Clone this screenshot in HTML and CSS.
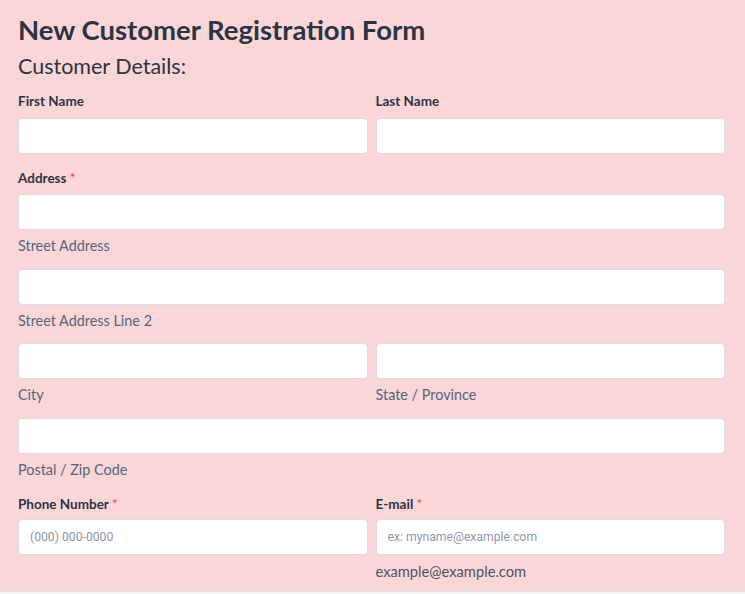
FILE: index.html
```html
<!DOCTYPE html>
<html lang="en">
<head>
<meta charset="utf-8">
<title>New Customer Registration Form</title>
<link rel="stylesheet" href="styles.css">
</head>
<body>
<div class="page">
  <form class="form">
    <h1 class="title">New Customer Registration Form</h1>
    <h2 class="subtitle">Customer Details:</h2>

    <div class="row first-row">
      <div class="field">
        <label class="label">First Name</label>
        <input class="input" type="text">
      </div>
      <div class="field">
        <label class="label">Last Name</label>
        <input class="input" type="text">
      </div>
    </div>

    <div class="section">
      <label class="label">Address <span class="req">*</span></label>
      <div class="group">
        <input class="input" type="text">
        <div class="sub">Street Address</div>
      </div>
      <div class="group tight">
        <input class="input" type="text">
        <div class="sub">Street Address Line 2</div>
      </div>
      <div class="row group">
        <div class="field">
          <input class="input" type="text">
          <div class="sub">City</div>
        </div>
        <div class="field">
          <input class="input" type="text">
          <div class="sub">State / Province</div>
        </div>
      </div>
      <div class="group last">
        <input class="input" type="text">
        <div class="sub">Postal / Zip Code</div>
      </div>
    </div>

    <div class="row section contact">
      <div class="field">
        <label class="label">Phone Number <span class="req">*</span></label>
        <input class="input" type="text" placeholder="(000) 000-0000">
      </div>
      <div class="field">
        <label class="label">E-mail <span class="req">*</span></label>
        <input class="input" type="text" placeholder="ex: myname@example.com">
        <div class="sub sub-dark">example@example.com</div>
      </div>
    </div>
  </form>
</div>
</body>
</html>
```

FILE: styles.css
```css
html, body {
  margin: 0;
  padding: 0;
  background: #f3f3f5;
}
body {
  font-family: "Lato", "Open Sans", "Liberation Sans", sans-serif;
  color: #2c3345;
}
.page {
  width: 745px;
  height: 591px;
  background: #fad6d6;
  border-bottom: 1px solid #dadde4;
  overflow: hidden;
}
.form {
  padding: 12px 20px 0 18px;
  display: flex;
  flex-direction: column;
}
.title {
  margin: 0;
  font-size: 27.5px;
  line-height: 36px;
  font-weight: 700;
  color: #2c3345;
}
.subtitle {
  margin: 4px 0 0;
  font-size: 21.5px;
  line-height: 28px;
  font-weight: 400;
  color: #2c3345;
}
.row {
  display: flex;
  gap: 8px;
}
.field {
  flex: 1 1 0;
  display: flex;
  flex-direction: column;
  min-width: 0;
}
.first-row {
  margin-top: 12px;
}
.label {
  display: block;
  font-size: 13.5px;
  line-height: 18px;
  font-weight: 700;
  margin-bottom: 8px;
}
.section .label {
  margin-bottom: 7px;
}
.contact .label {
  margin-bottom: 6px;
}
.req {
  color: #f23a3c;
  font-weight: 400;
}
.section {
  margin-top: 15px;
}
.group {
  margin-bottom: 15px;
}
.group.tight {
  margin-bottom: 14px;
}
.group.last {
  margin-bottom: 0;
}
.section + .section {
  margin-top: 17px;
}
.input {
  box-sizing: border-box;
  display: block;
  width: 100%;
  height: 36px;
  margin: 0;
  padding: 0 11px;
  background: #ffffff;
  border: 1px solid #d8dbe5;
  border-radius: 4px;
  font-family: "Roboto", "Liberation Sans", sans-serif;
  font-size: 12.2px;
  color: #2c3345;
  outline: none;
}
.input::placeholder {
  color: #8f96a8;
}
.sub {
  margin-top: 8px;
  font-size: 14.4px;
  line-height: 16px;
  color: #57647e;
}
.sub-dark {
  margin-top: 8px;
  font-size: 14.7px;
  color: #4d5468;
}
```
